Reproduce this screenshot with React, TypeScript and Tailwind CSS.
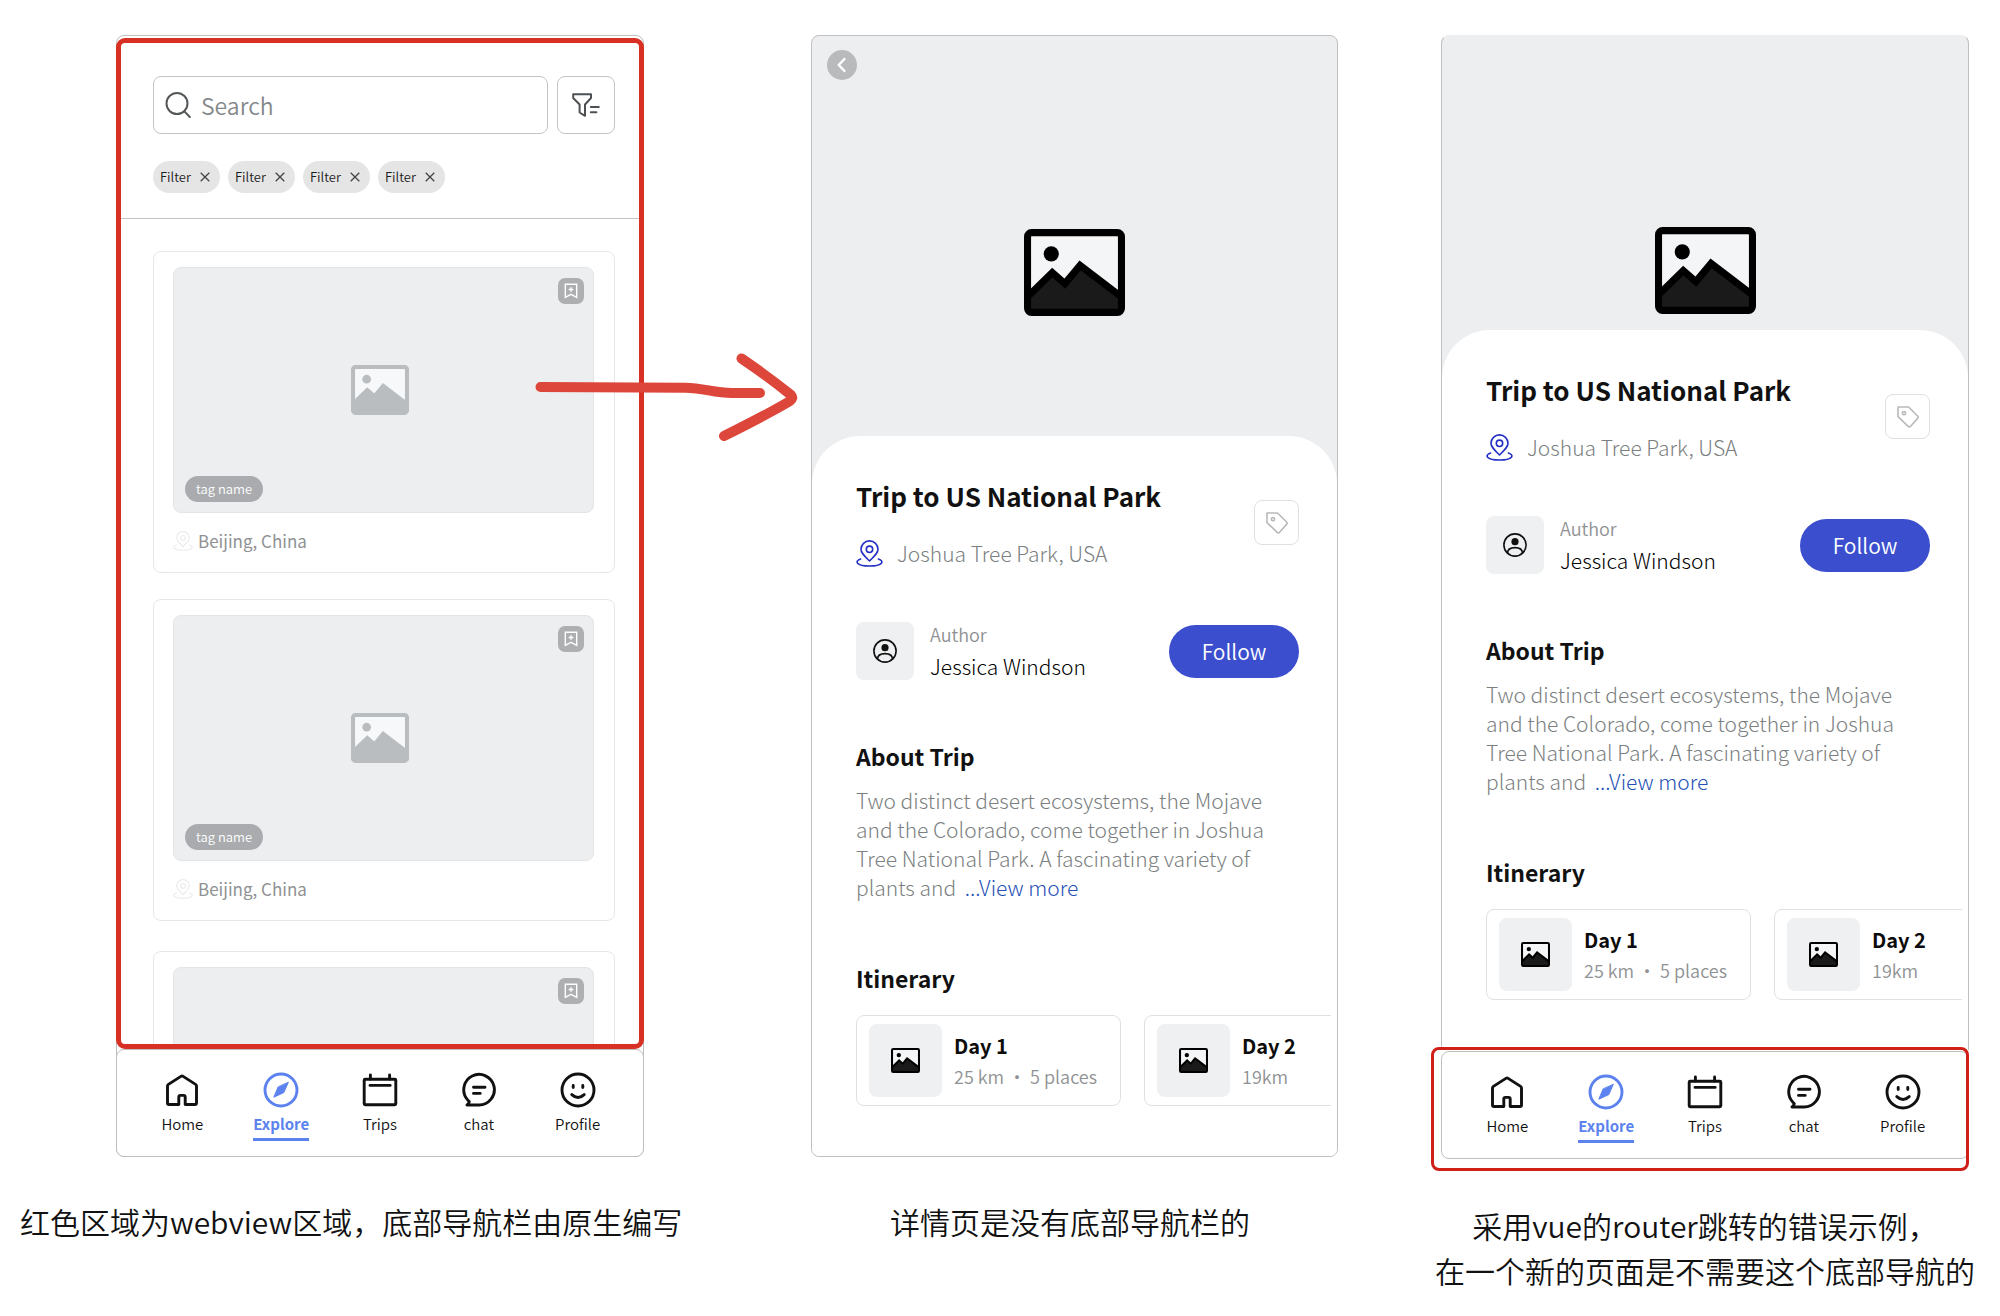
import React from "react";

type IconProps = { className?: string };

function PictureIcon({ className, light = false }: IconProps & { light?: boolean }) {
  const edge = light ? "#b9bdc0" : "#000000";
  const hill = light ? "#b9bdc0" : "#1a1a1a";
  const sky = light ? "#f7f8f9" : "#f4f5f6";
  return (
    <svg viewBox="0 0 100 86" className={className} aria-hidden="true">
      <rect x="3.5" y="3.5" width="93" height="79" rx="4" fill={sky} />
      <path d="M5 65.500 L28 43 L40.5 54 L55.5 36 L95 66 V80 H5 Z" fill={hill} />
      <path d="M5 65.500 L28 43 L40.5 54 L55.5 36 L95 66" fill="none" stroke={edge} strokeWidth="7" />
      <rect x="3.5" y="3.5" width="93" height="79" rx="4" fill="none" stroke={edge} strokeWidth="7" />
      <circle cx="27" cy="24.5" r="7.5" fill={edge} />
    </svg>
  );
}

function PinIcon({ className }: IconProps) {
  return (
    <svg viewBox="0 0 27 27" className={className} fill="none" stroke="currentColor" strokeWidth="1.6" strokeLinecap="round" aria-hidden="true">
      <path d="M13.5 21 C8 15.5 5 13 5 9.3 a8.5 8.4 0 0 1 17 0 C22 13 19 15.5 13.5 21 Z" strokeLinejoin="round" />
      <circle cx="13.5" cy="9.3" r="3.2" />
      <path d="M4.6 19 C-1.4 20.8 -.4 26 13.5 26 C27.4 26 28.4 20.8 22.4 19" />
    </svg>
  );
}

function TagIcon({ className }: IconProps) {
  return (
    <svg viewBox="0 0 22 22" className={className} fill="none" stroke="currentColor" strokeWidth="1.6" strokeLinejoin="round" aria-hidden="true">
      <path d="M1 1 H11.5 L20.6 10 Q21.6 11.2 20.6 12.4 L13.6 20.3 Q12.4 21.4 11.2 20.3 L1 10.6 Z" />
      <circle cx="7" cy="7.2" r="1.6" />
    </svg>
  );
}

function UserIcon({ className }: IconProps) {
  return (
    <svg viewBox="0 0 24 24" className={className} fill="none" stroke="currentColor" strokeWidth="1.6" aria-hidden="true">
      <circle cx="12" cy="12" r="11.1" />
      <circle cx="12" cy="8.7" r="3.6" fill="currentColor" stroke="none" />
      <path d="M4.6 20 C4.6 16 7.5 14.6 12 14.6 S19.4 16 19.4 20" />
    </svg>
  );
}

function BookmarkIcon({ className }: IconProps) {
  return (
    <svg viewBox="0 0 14 16" className={className} fill="none" stroke="currentColor" strokeWidth="1.4" aria-hidden="true">
      <path d="M1.3 1.2 H12.7 V14.4 L7 11.4 L1.3 14.4 Z" />
      <path d="M7 4.2 V8.8 M4.7 6.5 H9.3" />
    </svg>
  );
}

function HomeIcon() {
  return <path d="M3.5 14 Q3.5 13 4.4 12.4 L16.9 4.4 Q18 3.7 19.1 4.4 L31.6 12.4 Q32.5 13 32.5 14 V31 Q32.5 32.5 31 32.5 H21.2 V25 Q21.2 23.4 19.6 23.4 H16.4 Q14.8 23.4 14.8 25 V32.5 H5 Q3.5 32.5 3.5 31 Z" />;
}

function CompassIcon() {
  return (
    <>
      <circle cx="18" cy="18" r="16" />
      <path d="M25.2 10.6 L20.8 20.6 L10.8 25.2 L15 15.2 Z" fill="currentColor" strokeWidth="1" />
    </>
  );
}

function CalendarIcon() {
  return (
    <>
      <rect x="2.2" y="7.2" width="31.6" height="25.6" rx="1" />
      <path d="M8.4 3 V7 M27.6 3 V7 M8 13.4 H28.2" />
    </>
  );
}

function ChatIcon() {
  return (
    <>
      <path d="M18 33 A15.3 15.3 0 1 0 6.4 27.6 L8.3 29.8 Q8 31.2 6 33 Z" />
      <path d="M12.5 15.2 H24 M12.5 21.4 H19.2" />
    </>
  );
}

function SmileIcon() {
  return (
    <>
      <circle cx="18" cy="18" r="16" />
      <path d="M13.2 13.4 V15.6 M22.8 13.4 V15.6 M11.8 22.6 Q18 28.4 24.2 22.6" />
    </>
  );
}

const navItems = [
  { label: "Home", icon: <HomeIcon /> },
  { label: "Explore", icon: <CompassIcon />, active: true },
  { label: "Trips", icon: <CalendarIcon /> },
  { label: "chat", icon: <ChatIcon /> },
  { label: "Profile", icon: <SmileIcon /> },
];

function BottomNav() {
  return (
    <nav className="grid h-[108px] grid-cols-5 rounded-lg border border-[#bfbfbf] bg-white px-4 pt-[22px]">
      {navItems.map((item) => (
        <a
          key={item.label}
          href={"#" + item.label.toLowerCase()}
          className={
            item.active
              ? "flex flex-col items-center text-[#5b82ee]"
              : "flex flex-col items-center text-[#111111]"
          }
        >
          <svg viewBox="0 0 36 36" className="size-9" fill="none" stroke="currentColor" strokeWidth="2.9" strokeLinecap="round" strokeLinejoin="round" aria-hidden="true">
            {item.icon}
          </svg>
          <span
            className={
              item.active
                ? "mt-1 border-b-[3px] border-[#5b82ee] pb-0.5 text-[15px] leading-6 font-bold"
                : "mt-1 text-[15px] leading-6"
            }
          >
            {item.label}
          </span>
        </a>
      ))}
    </nav>
  );
}

function PlaceCard({ tag, place }: { tag?: string; place?: string }) {
  return (
    <article className="rounded-lg border border-[#e7e7e7] bg-white pt-[15px] pr-5 pl-[19px]">
      <div className="relative flex h-[246px] items-center justify-center rounded-lg border border-[#e3e4e5] bg-[#edeef0] pr-2">
        <PictureIcon light className="w-[58px]" />
        <button type="button" aria-label="Save" className="absolute top-2.5 right-[9px] flex size-[26px] items-center justify-center rounded-[7px] bg-[#adafb1] text-white">
          <BookmarkIcon className="w-[14px]" />
        </button>
        {tag && (
          <span className="absolute bottom-2.5 left-[11px] rounded-full bg-[#a9abae] px-[11px] text-[13px] leading-[26px] text-white">{tag}</span>
        )}
      </div>
      {place && (
        <div className="flex items-center gap-[5px] pt-[13px] pb-4">
          <PinIcon className="w-5 text-[#ececec]" />
          <span className="text-[17px] leading-[30px] font-normal text-[#8f9193]">{place}</span>
        </div>
      )}
    </article>
  );
}

function ExploreScreen() {
  return (
    <div className="rounded-lg border border-[#bfbfbf] bg-white pt-0.5">
      <div className="-mx-px h-[1011px] overflow-hidden rounded-[9px] border-5 border-[#d93025]">
        <div className="border-b border-[#c4c4c4] pt-[33px] pr-6 pb-[25px] pl-8">
          <div className="flex gap-[9px]">
            <label className="flex h-[58px] min-w-0 flex-1 items-center gap-2.5 rounded-lg border border-[#c4c4c4] pl-[11px] text-[#55585a]">
              <svg viewBox="0 0 26 26" className="w-[26px]" fill="none" stroke="currentColor" strokeWidth="2" strokeLinecap="round" aria-hidden="true">
                <circle cx="12" cy="11.5" r="10.5" />
                <path d="M19.4 19.4 L24.8 25" />
              </svg>
              <input type="search" aria-label="Search" placeholder="Search" className="min-w-0 flex-1 bg-transparent text-[23px] leading-[36px] outline-none placeholder:text-[#85888a]" />
            </label>
            <button type="button" aria-label="Filters" className="flex size-[58px] items-center justify-center rounded-lg border border-[#c4c4c4] text-[#4e5154]">
              <svg viewBox="0 0 28 24" className="w-7" fill="none" stroke="currentColor" strokeWidth="2" strokeLinejoin="round" strokeLinecap="round" aria-hidden="true">
                <path d="M1.2 1.2 H19 V5 L13 11.5 V22.8 L7.6 19.5 V11.5 L1.2 5 Z" />
                <path d="M18.8 14 H26.8 M18.8 19.2 H24.4" />
              </svg>
            </button>
          </div>
          <div className="mt-[27px] flex gap-2">
            {[1, 2, 3, 4].map((n) => (
              <button key={n} type="button" className="flex h-8 w-[67px] items-center gap-[9px] rounded-full bg-[#e5e5e5] pl-[7px] text-[13px] leading-5 text-[#1c1c1c]">
                Filter
                <svg viewBox="0 0 10 10" className="w-2.5" stroke="#444444" strokeWidth="1.3" aria-hidden="true">
                  <path d="M.7 .7 L9.3 9.3 M9.3 .7 L.7 9.3" />
                </svg>
              </button>
            ))}
          </div>
        </div>
        <div className="flex flex-col gap-[26px] pt-8 pr-6 pl-8">
          <PlaceCard tag="tag name" place="Beijing, China" />
          <PlaceCard tag="tag name" place="Beijing, China" />
          <div className="pt-1">
            <PlaceCard />
          </div>
        </div>
      </div>
      <div className="-mx-px -mb-px">
        <BottomNav />
      </div>
    </div>
  );
}

function DayCard({ title, detail }: { title: string; detail: string }) {
  return (
    <article className="flex w-[265px] shrink-0 gap-3 rounded-lg border border-[#e0e0e0] py-2 pl-3">
      <div className="flex size-[73px] items-center justify-center rounded-lg bg-[#eff0f1]">
        <PictureIcon className="w-[29px]" />
      </div>
      <div className="pt-[7px]">
        <h4 className="text-[20px] leading-[30px] font-bold text-[#0c0c0c]">{title}</h4>
        <p className="mt-px text-[18px] leading-[28px] whitespace-pre text-[#8f9193]">{detail}</p>
      </div>
    </article>
  );
}

function DetailSheet() {
  return (
    <div className="overflow-hidden rounded-t-[48px] bg-white pt-[42px] pr-[38px] pb-[50px] pl-11">
      <div className="flex items-start justify-between">
        <div>
          <h2 className="text-[26px] leading-[36px] font-bold text-[#111111]">Trip to US National Park</h2>
          <p className="mt-6 flex items-center gap-3.5 text-[21px] leading-[30px] font-light text-[#7c7f81]">
            <PinIcon className="w-[27px] text-[#2430c4]" />
            Joshua Tree Park, USA
          </p>
        </div>
        <button type="button" aria-label="Tag" className="mt-[22px] flex size-[45px] items-center justify-center rounded-lg border border-[#e0e0e0] text-[#b9b9b9]">
          <TagIcon className="w-[22px]" />
        </button>
      </div>
      <div className="mt-[53px] flex items-center">
        <div className="flex size-[58px] items-center justify-center rounded-lg bg-[#eff0f1] text-[#111111]">
          <UserIcon className="w-6" />
        </div>
        <div className="ml-4">
          <p className="text-[18px] leading-[26px] text-[#8f9193]">Author</p>
          <p className="mt-1 text-[21px] leading-[30px] font-light text-black">Jessica Windson</p>
        </div>
        <button type="button" className="ml-auto h-[53px] w-[130px] rounded-full bg-[#3b4fce] text-[21px] leading-[30px] text-white">Follow</button>
      </div>
      <h3 className="mt-[57px] text-[23px] leading-[36px] font-bold text-[#111111]">About Trip</h3>
      <p className="mt-3 text-[21px] leading-[29px] font-light whitespace-nowrap text-[#7c7f81]">
        Two distinct desert ecosystems, the Mojave
        <br />
        and the Colorado, come together in Joshua
        <br />
        Tree National Park. A fascinating variety of
        <br />
        plants and <a href="#more" className="ml-1 text-[#2450b5]">...View more</a>
      </p>
      <h3 className="mt-[58px] text-[23px] leading-[36px] font-bold text-[#111111]">Itinerary</h3>
      <div className="mt-[19px] -mr-8 flex gap-[23px] overflow-hidden">
        <DayCard title="Day 1" detail={"25 km ・ 5 places"} />
        <DayCard title="Day 2" detail="19km" />
      </div>
    </div>
  );
}

export default function App() {
  return (
    <main className="relative grid grid-cols-[minmax(0,694fr)_minmax(0,694fr)_minmax(0,612fr)] items-start bg-white pt-[35px] pb-6 font-['Noto_Sans_CJK_SC',sans-serif] font-[350] text-[#111111]">
      <section>
        <div className="pr-[50px] pl-[116px]">
          <ExploreScreen />
        </div>
        <p className="mt-[42px] pl-5 text-[30px] leading-[45px] whitespace-nowrap">红色区域为webview区域，底部导航栏由原生编写</p>
      </section>

      <section>
        <div className="pr-[50px] pl-[117px]">
          <div className="relative overflow-hidden rounded-lg border border-[#bfbfbf] bg-[#edeef0]">
            <button type="button" aria-label="Back" className="absolute top-3.5 left-[15px] flex size-[30px] items-center justify-center rounded-full bg-[#b9babb]">
              <svg viewBox="0 0 10 16" className="w-2.5" fill="none" stroke="#ffffff" strokeWidth="2.4" strokeLinecap="round" strokeLinejoin="round" aria-hidden="true">
                <path d="M7.500 2 L1.700 8 L7.500 14" />
              </svg>
            </button>
            <div className="flex h-[400px] justify-center pt-[193px]">
              <PictureIcon className="h-[87px] w-[101px]" />
            </div>
            <DetailSheet />
          </div>
        </div>
        <p className="mt-[42px] pr-[50px] pl-[108px] text-center text-[30px] leading-[45px] whitespace-nowrap">详情页是没有底部导航栏的</p>
      </section>

      <section className="pr-[31px] pl-[53px]">
        <div className="overflow-hidden rounded-t-lg border-x border-t border-[#bfbfbf] border-t-[#edeef0] bg-[#edeef0]">
          <div className="flex h-[294px] justify-center pt-[191px]">
            <PictureIcon className="h-[87px] w-[101px]" />
          </div>
          <DetailSheet />
        </div>
        <div className="relative pt-px">
          <BottomNav />
          <div className="pointer-events-none absolute -top-[3px] right-0 -bottom-3 -left-2.5 rounded-lg border-3 border-[#cf1f17]" />
        </div>
        <p className="-mx-5 mt-11 text-center text-[30px] leading-[45px] whitespace-nowrap">
          采用vue的router跳转的错误示例，
          <br />
          在一个新的页面是不需要这个底部导航的
        </p>
      </section>

      <svg viewBox="0 0 270 100" className="pointer-events-none absolute top-[348px] left-[530px] w-[270px]" fill="none" stroke="#dd473b" strokeWidth="10" strokeLinecap="round" strokeLinejoin="round" aria-hidden="true">
        <path d="M10.500 39 L155 39.700 C175 40 183 45 202 45 H230" />
        <path d="M211.500 10.500 C230 23 245 34 261 47 Q264 50 260 53 Q240 65 194 88" />
      </svg>
    </main>
  );
}
